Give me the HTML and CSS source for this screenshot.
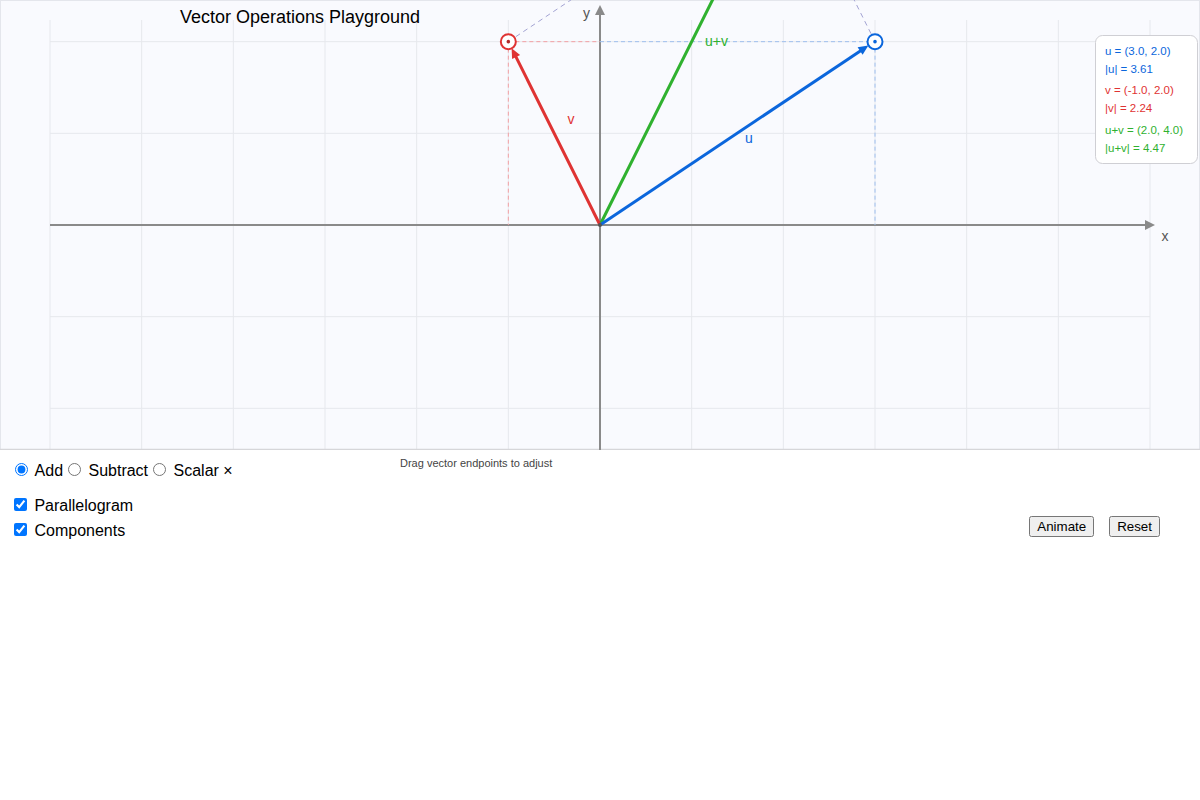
FILE: index.html
```html
<!DOCTYPE html>
<html lang="en">
<head>
<meta charset="utf-8">
<title>Vector Operations Playground</title>
<link rel="stylesheet" href="styles.css">
</head>
<body>
<div class="stage">
  <svg class="plot" width="1200" height="450" viewBox="0 0 1200 450" xmlns="http://www.w3.org/2000/svg">
    <rect class="bg" x="0.5" y="0.5" width="1199" height="450"/>
    <g class="grid">
      <line x1="50" y1="20" x2="50" y2="450"/>
      <line x1="141.67" y1="20" x2="141.67" y2="450"/>
      <line x1="233.33" y1="20" x2="233.33" y2="450"/>
      <line x1="325" y1="20" x2="325" y2="450"/>
      <line x1="416.67" y1="20" x2="416.67" y2="450"/>
      <line x1="508.33" y1="20" x2="508.33" y2="450"/>
      <line x1="600" y1="20" x2="600" y2="450"/>
      <line x1="691.67" y1="20" x2="691.67" y2="450"/>
      <line x1="783.33" y1="20" x2="783.33" y2="450"/>
      <line x1="875" y1="20" x2="875" y2="450"/>
      <line x1="966.67" y1="20" x2="966.67" y2="450"/>
      <line x1="1058.33" y1="20" x2="1058.33" y2="450"/>
      <line x1="1150" y1="20" x2="1150" y2="450"/>
      <line x1="50" y1="41.67" x2="1150" y2="41.67"/>
      <line x1="50" y1="133.33" x2="1150" y2="133.33"/>
      <line x1="50" y1="225" x2="1150" y2="225"/>
      <line x1="50" y1="316.67" x2="1150" y2="316.67"/>
      <line x1="50" y1="408.33" x2="1150" y2="408.33"/>
    </g>
    <line class="edge" x1="0" y1="449.5" x2="1200" y2="449.5"/>

    <text class="title" x="300" y="23">Vector Operations Playground</text>

    <g class="axes">
      <line x1="50" y1="225" x2="1146" y2="225"/>
      <polygon points="1155,225 1145,220 1145,230"/>
      <line x1="600" y1="450" x2="600" y2="14"/>
      <polygon points="600,5 595,15 605,15"/>
    </g>
    <text class="axis-label" x="1165" y="241" text-anchor="middle">x</text>
    <text class="axis-label" x="586.5" y="18" text-anchor="middle">y</text>

    <g class="comp-v">
      <line x1="508.33" y1="41.67" x2="600" y2="41.67"/>
      <line x1="508.33" y1="41.67" x2="508.33" y2="225"/>
    </g>
    <g class="comp-u">
      <line x1="600" y1="41.67" x2="875" y2="41.67"/>
      <line x1="875" y1="41.67" x2="875" y2="225"/>
    </g>
    <g class="para">
      <line x1="508.33" y1="41.67" x2="783.33" y2="-141.67"/>
      <line x1="875" y1="41.67" x2="783.33" y2="-141.67"/>
    </g>

    <line class="vec-sum" x1="600" y1="225" x2="783.33" y2="-141.67"/>
    <line class="vec-v" x1="600" y1="225" x2="515.2" y2="55.3"/>
    <polygon class="head-v" points="511.6,48.2 520.1,55.1 512.1,59.1"/>
    <line class="vec-u" x1="600" y1="225" x2="861.8" y2="49.9"/>
    <polygon class="head-u" points="868.4,45.4 862.6,54.7 857.6,47.3"/>
    <circle class="origin" cx="600" cy="225" r="2"/>

    <circle class="handle-v" cx="508.33" cy="41.67" r="7.5"/>
    <circle class="dot-v" cx="508.33" cy="41.67" r="1.8"/>
    <circle class="handle-u" cx="875" cy="41.67" r="7.5"/>
    <circle class="dot-u" cx="875" cy="41.67" r="1.8"/>

    <text class="lbl lbl-u" x="749" y="142.5" text-anchor="middle">u</text>
    <text class="lbl lbl-v" x="571" y="123.5" text-anchor="middle">v</text>
    <text class="lbl lbl-sum" x="705" y="46">u+v</text>

    <rect class="info" x="1095.5" y="35.5" width="102" height="128" rx="7" ry="7"/>
    <text class="info-text t-u" x="1105" y="54.5">u = (3.0, 2.0)</text>
    <text class="info-text t-u" x="1105" y="73">|u| = 3.61</text>
    <text class="info-text t-v" x="1105" y="94">v = (-1.0, 2.0)</text>
    <text class="info-text t-v" x="1105" y="112">|v| = 2.24</text>
    <text class="info-text t-s" x="1105" y="134">u+v = (2.0, 4.0)</text>
    <text class="info-text t-s" x="1105" y="152">|u+v| = 4.47</text>
  </svg>
</div>

<div class="controls">
  <div class="left">
    <div class="ops">
      <label><input type="radio" name="op" checked> Add</label>
      <label><input type="radio" name="op"> Subtract</label>
      <label><input type="radio" name="op"> Scalar ×</label>
    </div>
    <div class="toggles">
      <label class="check"><input type="checkbox" checked> Parallelogram</label>
      <label class="check"><input type="checkbox" checked> Components</label>
    </div>
  </div>
  <div class="hint">Drag vector endpoints to adjust</div>
  <div class="actions">
    <button type="button">Animate</button>
    <button type="button">Reset</button>
  </div>
</div>
</body>
</html>
```

FILE: styles.css
```css
html, body {
  margin: 0;
  padding: 0;
  background: #ffffff;
}

body {
  font-family: "Liberation Sans", Arial, sans-serif;
  color: #000;
  width: 1200px;
  height: 800px;
  overflow: hidden;
}

.stage {
  width: 1200px;
  height: 450px;
}

.plot {
  display: block;
  font-family: "Liberation Sans", Arial, sans-serif;
}

.bg {
  fill: #f9fafe;
  stroke: #e4e6ec;
  stroke-width: 1;
}

.grid line {
  stroke: #e6e8ed;
  stroke-width: 1;
}

.edge {
  stroke: #d6d6d9;
  stroke-width: 1.5;
}

.title {
  font-size: 18px;
  fill: #000;
  text-anchor: middle;
}

.axes line {
  stroke: #8a8a8a;
  stroke-width: 2;
}

.axes polygon {
  fill: #8a8a8a;
}

.axis-label {
  font-size: 14px;
  fill: #555;
}

.comp-v line {
  stroke: #f2a0a4;
  stroke-width: 1;
  stroke-dasharray: 4 3;
}

.comp-u line {
  stroke: #9fbfee;
  stroke-width: 1;
  stroke-dasharray: 4 3;
}

.para line {
  stroke: #a3a3d3;
  stroke-width: 1;
  stroke-dasharray: 5 4;
}

.vec-sum {
  stroke: #2fb12f;
  stroke-width: 3;
}

.vec-u {
  stroke: #0b66dc;
  stroke-width: 3;
}

.head-u {
  fill: #0b66dc;
}

.vec-v {
  stroke: #df3333;
  stroke-width: 3;
}

.head-v {
  fill: #df3333;
}

.origin {
  fill: #555;
}

.handle-u {
  fill: #ffffff;
  stroke: #0b66dc;
  stroke-width: 2;
}

.dot-u {
  fill: #0b66dc;
}

.handle-v {
  fill: #ffffff;
  stroke: #df3333;
  stroke-width: 2;
}

.dot-v {
  fill: #b02a2a;
}

.lbl {
  font-size: 14px;
}

.lbl-u { fill: #0b66dc; }
.lbl-v { fill: #df3333; }
.lbl-sum { fill: #2fb12f; }

.info {
  fill: #ffffff;
  stroke: #cfcfd4;
  stroke-width: 1;
}

.info-text {
  font-size: 11.5px;
}

.t-u { fill: #0b66dc; }
.t-v { fill: #df3333; }
.t-s { fill: #2fb12f; }

.controls {
  display: grid;
  grid-template-columns: 390px 1fr auto;
  padding: 10px 40px 0 10px;
  font-size: 16px;
}

.ops {
  display: flex;
  line-height: 20px;
}

.ops label {
  display: block;
}

.toggles {
  margin-top: 12px;
}

.check {
  display: block;
  line-height: 25px;
}

.hint {
  font-size: 11px;
  line-height: 13px;
  color: #444;
  margin-top: -3px;
}

.actions {
  display: flex;
  gap: 15px;
  margin-top: 56px;
  align-self: start;
}

.actions button {
  font-family: "Liberation Sans", Arial, sans-serif;
  font-size: 13.333px;
  margin: 0;
}
```
